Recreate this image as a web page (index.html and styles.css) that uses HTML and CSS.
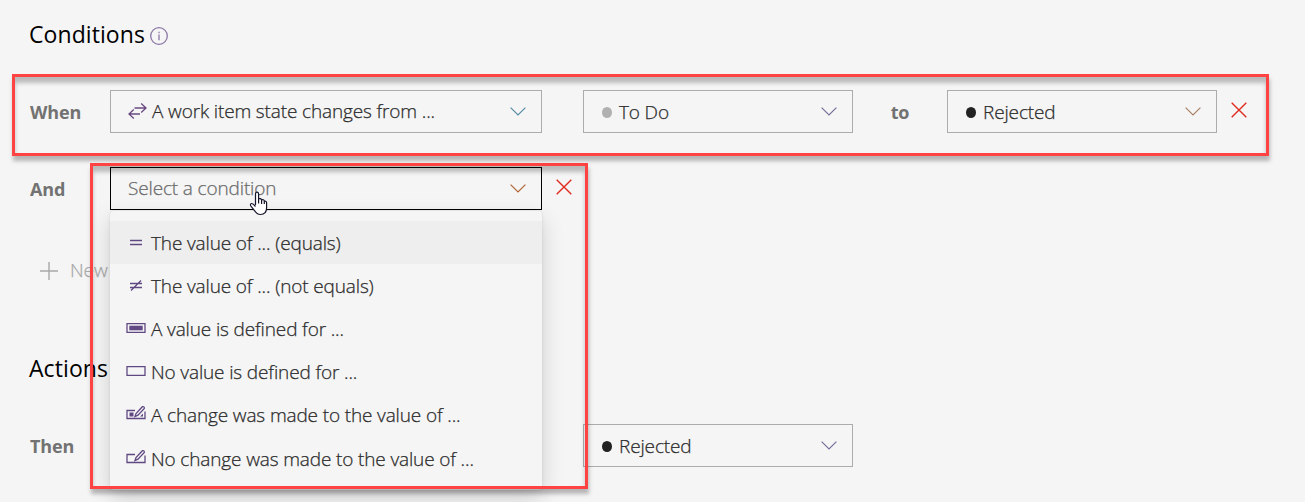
FILE: index.html
```html
<!DOCTYPE html>
<html lang="en">
<head>
<meta charset="utf-8">
<title>Rule conditions</title>
<link rel="stylesheet" href="styles.css">
</head>
<body>
<svg class="defs" width="0" height="0">
  <symbol id="chevron" viewBox="0 0 16 9"><path d="M.6 .6 8 8 15.4 .6"/></symbol>
  <symbol id="cross" viewBox="0 0 16 16"><path d="M.7 .7 15.3 15.3M15.3 .7 .7 15.3"/></symbol>
</svg>
<main class="rule">
  <h2 class="heading"><span>Conditions</span>
    <svg class="info" viewBox="0 0 18 18"><circle cx="9" cy="9" r="8.3"/><path d="M9 7.4V13.3M9 4.7V6.2"/></svg>
  </h2>
  <div class="row">
    <span class="label">When</span>
    <div class="select wide raised">
      <svg class="swap" viewBox="0 0 19 16"><path d="M6.5 5H18M13.2 .6 18 5 13.2 9.400M12 11H1M5.800 6.600 1 11 5.800 15.400"/></svg>
      <span class="value">A work item state changes from ...</span>
      <svg class="chevron blue"><use href="#chevron"/></svg>
    </div>
    <div class="select state"><i class="dot grey"></i><span class="value">To Do</span><svg class="chevron violet"><use href="#chevron"/></svg></div>
    <span class="label to">to</span>
    <div class="select state last"><i class="dot"></i><span class="value">Rejected</span><svg class="chevron brown"><use href="#chevron"/></svg></div>
    <svg class="cross"><use href="#cross"/></svg>
  </div>
  <div class="row second">
    <span class="label">And</span>
    <div class="select wide focused">
      <span class="value placeholder">Select a condition</span>
      <svg class="chevron orange"><use href="#chevron"/></svg>
      <ul class="menu">
        <li class="item active"><svg class="icon" viewBox="0 0 20 16"><path d="M4 6.500H16M4 10.500H16"/></svg><span>The value of ... (equals)</span></li>
        <li class="item"><svg class="icon" viewBox="0 0 20 16"><path d="M4 6.500H16M4 10.500H16M5 13.500 15 3.500"/></svg><span>The value of ... (not equals)</span></li>
        <li class="item"><svg class="icon" viewBox="0 0 20 16"><path d="M1 3.700H19V12.300H1Z"/><path class="fill" d="M3.300 5.700H16.700V10.300H3.300Z"/></svg><span>A value is defined for ...</span></li>
        <li class="item"><svg class="icon" viewBox="0 0 20 16"><path d="M1 3.700H19V12.300H1Z"/></svg><span>No value is defined for ...</span></li>
        <li class="item"><svg class="icon" viewBox="0 0 20 16"><path d="M9 4.500H1V12.500H19V5.500"/><path class="fill" d="M3.500 6.500H7.500V10.500H3.500ZM14 10.500 17 7.500V10.500Z"/><path d="M9 10.500 10 7.500 16.400 .7Q18.500 .2 18.300 2.400L12 9.200Z"/></svg><span>A change was made to the value of ...</span></li>
        <li class="item lower"><svg class="icon" viewBox="0 0 20 16"><path d="M9 4.500H1V12.500H19V5.500"/><path d="M9 10.500 10 7.500 16.400 .7Q18.500 .2 18.300 2.400L12 9.200Z"/></svg><span>No change was made to the value of ...</span></li>
      </ul>
    </div>
    <svg class="cross near"><use href="#cross"/></svg>
  </div>
  <div class="new"><svg class="plus" viewBox="0 0 18 18"><path d="M9 0V18M0 9H18"/></svg><span>New</span></div>
  <h2 class="heading actions"><span>Actions</span></h2>
  <div class="row">
    <span class="label">Then</span>
    <div class="select wide"></div>
    <div class="select state"><i class="dot"></i><span class="value">Rejected</span><svg class="chevron violet"><use href="#chevron"/></svg></div>
  </div>
</main>
<div class="callout when-box"></div>
<div class="callout and-box"></div>
<svg class="cursor" viewBox="0 0 19 25"><path d="M6.500 14V3Q6.500 1.200 8 1.200T9.600 3V8.500Q10 7.200 11.300 7.600T12.600 9.200Q13.200 8.200 14.300 8.700T15.300 10.200Q17.600 9.600 17.600 12V16.500C17.600 21.500 15 23.500 11.500 23.500C8 23.500 6.800 21.800 5.500 19.500L1.700 14.800Q1 13 2.400 12.500Q3.800 12.200 6.500 15.500M9.600 8.500V12.500M12.600 9.200V13M15.300 10.200V13"/></svg>
</body>
</html>
```
FILE: styles.css
```css
* { box-sizing: border-box; }
body {
  margin: 0;
  width: 1305px;
  height: 502px;
  overflow: hidden;
  position: relative;
  background: #f5f5f5;
  color: #2b2b2b;
  font: 19px/26px "Open Sans", "Noto Sans", sans-serif;
  font-weight: 300;
  letter-spacing: -.14px;
  white-space: nowrap;
}
svg { fill: none; stroke: currentColor; flex: none; overflow: visible; }
.defs { position: absolute; }
.rule { display: flex; flex-direction: column; padding-left: 30px; }
.heading { display: flex; align-items: center; gap: 5px; height: 70px; margin: 0 0 20px; font-size: 23px; font-weight: 400; letter-spacing: .08px; color: #000; }
.heading span { margin: -2px 0 0 -1px; }
.info { width: 18px; height: 18px; margin-top: 2px; color: #8b78a6; stroke-width: 1.3; }
.row { display: flex; align-items: center; height: 43px; }
.label { width: 80px; font-weight: 700; font-size: 18px; letter-spacing: -.15px; color: #727272; padding-top: 1px; }
.select { position: relative; display: flex; align-items: center; height: 43px; padding: 0 15px 0 17px; border: 1px solid #acacac; }
.wide { width: 432px; }
.state { width: 270px; margin-left: 41px; padding-left: 18px; }
.state .value { padding-top: 1px; }
.last { margin-left: 0; }
.to { width: 94px; text-align: center; }
.value { flex: 1; }
.value, .item span, .new span { -webkit-text-stroke: .25px currentColor; }
.raised .value { padding-bottom: 1px; }
.swap { width: 19px; height: 16px; margin: -2px 5px 0 0; color: #684a80; stroke-width: 1.300; }
.dot { width: 10px; height: 11px; margin-right: 7px; border-radius: 50%; background: #222; margin-top: 2px; }
.dot.grey { background: #b0b0b0; }
.chevron { width: 16px; height: 9px; stroke-width: 1.200; margin-top: -1px; }
.blue { color: #558ca4; }
.violet { color: #74709b; }
.brown { color: #aa8065; }
.orange { color: #b06434; }
.cross { width: 16px; height: 16px; margin: -3px 0 0 14px; color: #e02b20; stroke-width: 1.400; }
.second { margin-top: 34px; }
.focused { border-color: #000; }
.placeholder { color: #6a6a6a; padding-bottom: 2px; }
.menu { position: absolute; z-index: 1; top: 43px; left: -1px; width: 432px; height: 279px; margin: 0; padding: 10px 0 0; list-style: none; background: #f5f5f5; border-radius: 4px; box-shadow: 0 8px 22px rgba(0,0,0,.16), 0 0 3px rgba(0,0,0,.1); }
.item { display: flex; align-items: center; gap: 5px; height: 43px; padding: 1px 0 0 16px; }
.item.active { background: #eee; }
.item.lower { margin-top: 1px; }
.icon { width: 20px; height: 16px; color: #604983; stroke-width: 1.300; margin-top: -2px; }
.fill { fill: currentColor; stroke: none; }
.new { display: flex; align-items: center; gap: 12px; height: 26px; margin: 48px 0 0 10px; color: #a8a8a8; }
.new span { letter-spacing: -.1px; margin-top: -2px; }
.plus { width: 18px; height: 18px; stroke-width: 1.400; }
.actions { height: 50px; margin: 60px 0 30px; }
.callout { position: absolute; z-index: 2; border: 3px solid #ff4242; box-shadow: 1px 5px 4px rgba(0,0,0,.26), inset 0 6px 4px rgba(0,0,0,.24); pointer-events: none; }
.when-box { left: 12px; top: 74px; width: 1257px; height: 82px; }
.and-box { left: 90px; top: 163px; width: 498px; height: 326px; }
.cursor { position: absolute; z-index: 3; left: 249px; top: 191px; width: 19px; height: 25px; fill: #fff; stroke: #14142b; stroke-width: 1.200; }
```
